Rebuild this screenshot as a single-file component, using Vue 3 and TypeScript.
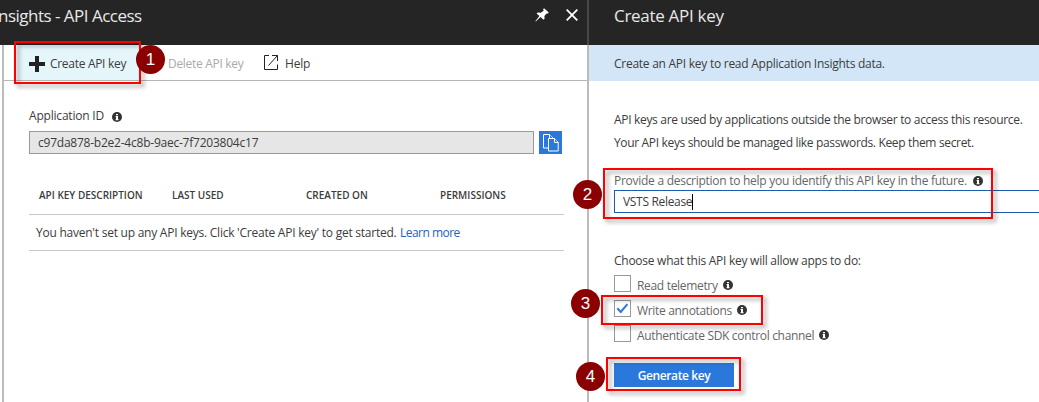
<script setup lang="ts">
import { ref } from 'vue'

interface Permission {
  id: string
  label: string
  checked: boolean
}

const columns = [
  { id: 'desc', label: 'API KEY DESCRIPTION' },
  { id: 'used', label: 'LAST USED' },
  { id: 'created', label: 'CREATED ON' },
  { id: 'perms', label: 'PERMISSIONS' },
]

const permissions = ref<Permission[]>([
  { id: 'read', label: 'Read telemetry', checked: false },
  { id: 'write', label: 'Write annotations', checked: true },
  { id: 'auth', label: 'Authenticate SDK control channel', checked: false },
])

const description = ref('VSTS Release')
const steps = [1, 2, 3, 4]
</script>

<template>
  <div class="screen">
    <section class="blade access">
      <header class="head">
        <h1 class="title access-title">nsights - API Access</h1>
        <svg class="pin" width="14" height="14" viewBox="0 0 14 14">
          <path d="M9 0.3 L13.8 4.5 L12.8 5.6 L11.6 5.4 L9.4 8 L9.6 10.8 L8.6 11.7 L5.5 9 L0.8 13.6 L0.3 13.2 L4.4 8 L1.6 5.6 L2.7 4.5 L5.9 4.7 L8.8 2.5 L8.1 1.2 Z" fill="#fff" />
        </svg>
        <svg class="close" width="12" height="12" viewBox="0 0 12 12">
          <path d="M0.7 0.7 L11.3 11.3 M11.3 0.7 L0.7 11.3" stroke="#fff" stroke-width="1.8" />
        </svg>
      </header>
      <div class="access-body">
        <nav class="toolbar">
          <button class="tool create">
            <svg width="16" height="16" viewBox="0 0 16 16"><path d="M6 0h4v6h6v4h-6v6H6v-6H0V6h6z" fill="#222" /></svg>
            <span class="t-create">Create API key</span>
          </button>
          <button class="tool delete"><span class="t-delete">Delete API key</span></button>
          <button class="tool help">
            <svg width="15" height="15" viewBox="0 0 15 15" fill="none" stroke="#222"><path d="M5 .5H.5V14.5H13.5V9.5M8 .5H13.5V6M13.5 .5L4.5 10.5" /></svg>
            <span class="t-help">Help</span>
          </button>
        </nav>
        <div class="content">
          <div class="label-row">
            <span class="t-appid">Application ID</span>
            <svg class="info" width="10" height="10" viewBox="0 0 10 10"><circle cx="5" cy="5" r="5" fill="#333" /><path d="M4 2h2v1.3H4zM3.6 4.1H6v3.2h.6v.9H3.5v-.9H4V5h-.4z" fill="#fff" /></svg>
          </div>
          <div class="id-row">
            <div class="id-box"><span class="t-uuid">c97da878-b2e2-4c8b-9aec-7f7203804c17</span></div>
            <button class="copy">
              <svg width="16" height="18" viewBox="0 0 16 18" fill="#2a78db" stroke="#fff">
                <path d="M.5 .5H6.5L10.5 4.5V14H.5Z" />
                <path d="M6.5 .5V4.5H10" />
                <path d="M5.5 4.5H11.5L15.2 8.2V17H5.5Z" />
                <path d="M11.5 4.5V8.5H15" />
              </svg>
            </button>
          </div>
          <div class="table">
            <div class="table-head">
              <span v-for="c in columns" :key="c.id" :class="'col-' + c.id">{{ c.label }}</span>
            </div>
            <div class="table-row">
              <span class="t-empty">You haven't set up any API keys. Click 'Create API key' to get started.</span>
              <a class="t-learn">Learn more</a>
            </div>
          </div>
        </div>
      </div>
    </section>

    <div class="divider"></div>

    <section class="blade create-blade">
      <header class="head"><h1 class="title create-title">Create API key</h1></header>
      <div class="banner"><span class="t-banner">Create an API key to read Application Insights data.</span></div>
      <div class="form">
        <p class="para"><span class="t-para1">API keys are used by applications outside the browser to access this resource.</span></p>
        <p class="para"><span class="t-para2">Your API keys should be managed like passwords. Keep them secret.</span></p>
        <div class="field-label">
          <span class="t-provide">Provide a description to help you identify this API key in the future.</span>
          <svg class="info" width="10" height="10" viewBox="0 0 10 10"><circle cx="5" cy="5" r="5" fill="#333" /><path d="M4 2h2v1.3H4zM3.6 4.1H6v3.2h.6v.9H3.5v-.9H4V5h-.4z" fill="#fff" /></svg>
        </div>
        <div class="field"><span class="t-value">{{ description }}</span><i class="caret"></i></div>
        <p class="choose"><span class="t-choose">Choose what this API key will allow apps to do:</span></p>
        <div v-for="p in permissions" :key="p.id" class="check-row" @click="p.checked = !p.checked">
          <span class="box">
            <svg v-if="p.checked" width="13" height="11" viewBox="0 0 13 11"><path d="M1.3 5.2L4.8 9L11.4 1.2" fill="none" stroke="#2a78db" stroke-width="2" /></svg>
          </span>
          <span class="check-label">{{ p.label }}</span>
          <svg class="info" width="10" height="10" viewBox="0 0 10 10"><circle cx="5" cy="5" r="5" fill="#333" /><path d="M4 2h2v1.3H4zM3.6 4.1H6v3.2h.6v.9H3.5v-.9H4V5h-.4z" fill="#fff" /></svg>
        </div>
        <button class="generate"><span class="t-generate">Generate key</span></button>
      </div>
    </section>

    <template v-for="n in steps" :key="n">
      <div class="frame" :class="'frame-' + n"></div>
      <div class="step" :class="'step-' + n">{{ n }}</div>
    </template>
  </div>
</template>

<style>
html, body { margin: 0; overflow: hidden; }
</style>

<style scoped>
.screen {
  position: relative;
  display: flex;
  width: 1039px;
  height: 402px;
  overflow: hidden;
  background: #fff;
  color: #3c3c3c;
  font: 12px/16px "Open Sans", "Noto Sans", sans-serif;
  letter-spacing: -0.26px;
  white-space: nowrap;
}
button {
  border: 0;
  padding: 0;
  margin: 0;
  background: none;
  color: inherit;
  font: inherit;
  letter-spacing: inherit;
}
svg { display: block; flex: none; }
span { flex: none; }
.blade { display: flex; flex-direction: column; }
.access { width: 587px; flex: none; }
.create-blade { flex: 1; min-width: 0; }
.head {
  display: flex;
  height: 45px;
  flex: none;
  background: #252525;
  color: #e8e8e8;
}
.title { margin: 0; font-size: 17px; line-height: 24px; font-weight: 400; padding-top: 4px; }
.access-title { width: 535px; margin-left: -2px; letter-spacing: -0.51px; }
.create-title { padding-left: 25px; letter-spacing: -0.3px; }
.pin { margin-top: 8px; margin-left: 2px; }
.close { margin: 9px 0 0 17px; }
.divider {
  width: 2px;
  flex: none;
  background: linear-gradient(#484848 45px, #bbb 45px);
}
.access-body {
  flex: 1;
  margin-left: 2px;
  border-left: 2px solid #bbb;
}
.toolbar {
  display: flex;
  height: 35px;
  border-bottom: 1px solid #b5b5b5;
}
.tool { display: flex; align-items: center; padding-top: 2px; box-sizing: border-box; }
.create { width: 123px; margin-left: 13px; padding-left: 12px; gap: 5px; background: #e5f6fb; }
.delete { margin-left: 28px; color: #aaa; width: 76px; }
.t-create, .t-delete { letter-spacing: -0.3px; }
.help { margin-left: 20px; gap: 6px; letter-spacing: -0.2px; }
.help svg { margin-top: -3px; }
.content { padding: 26px 23px 0 25px; }
.label-row { display: flex; align-items: center; height: 16px; gap: 8px; }
.t-appid { padding-top: 1px; letter-spacing: -0.2px; }
.label-row .info { margin-top: 3px; }
.id-row { display: flex; margin-top: 8px; gap: 5px; }
.id-box {
  display: flex;
  align-items: center;
  width: 505px;
  height: 23px;
  box-sizing: border-box;
  border: 1px solid #999;
  background: #e6e6e6;
  padding-left: 8px;
}
.t-uuid { padding-top: 1px; letter-spacing: -0.23px; }
.copy { display: flex; align-items: center; justify-content: center; width: 23px; height: 23px; background: #2a78db; }
.table { margin-top: 26px; }
.table-head {
  display: flex;
  align-items: center;
  height: 30px;
  padding: 0 0 4px 10px;
  border-bottom: 1px solid #c8c8c8;
  font-size: 10px;
  font-weight: 600;
  letter-spacing: 0;
}
.col-desc { width: 133px; }
.col-used { width: 134px; }
.col-created { width: 134px; }
.table-row {
  display: flex;
  align-items: center;
  height: 35px;
  padding-left: 7px;
  gap: 4px;
  border-bottom: 1px solid #c8c8c8;
}
.t-empty { width: 360px; letter-spacing: -0.24px; }
.t-learn { color: #1f5fc0; letter-spacing: -0.52px; }
.banner {
  display: flex;
  align-items: center;
  height: 36px;
  padding: 1px 0 0 25px;
  box-sizing: border-box;
  background: #d3e6f7;
}
.form { padding: 31px 0 0 25px; }
.para { height: 16px; margin: 0 0 7px; }
.t-para1 { letter-spacing: -0.32px; }
.t-para2 { letter-spacing: -0.34px; }
.field-label { display: flex; align-items: center; gap: 6px; height: 16px; margin-top: 22px; color: #666; }
.t-provide { letter-spacing: -0.27px; }
.field-label .info { margin-top: -1px; }
.field {
  display: flex;
  align-items: center;
  height: 23px;
  width: 440px;
  box-sizing: border-box;
  border: 1px solid #1c5bad;
  padding-left: 8px;
  margin-top: 1px;
}
.t-value { padding-top: 1px; letter-spacing: -0.32px; }
.caret { width: 1px; height: 16px; background: #000; }
.choose { height: 16px; margin: 40px 0 6px; }
.check-row { display: flex; align-items: center; gap: 6px; height: 17px; margin-bottom: 8px; color: #666; }
.box {
  display: flex;
  align-items: center;
  justify-content: center;
  width: 17px;
  height: 17px;
  box-sizing: border-box;
  border: 1px solid #999;
}
.check-label { padding-top: 4px; letter-spacing: -0.32px; }
.check-row .info { margin: 2px 0 0 -1px; }
.generate {
  display: flex;
  align-items: center;
  justify-content: center;
  width: 120px;
  height: 24px;
  margin-top: 21px;
  background: #2a78db;
  color: #fff;
  font-weight: 600;
}
.t-generate { padding-top: 2px; letter-spacing: -0.4px; }

.frame {
  position: absolute;
  box-sizing: border-box;
  border: 2px solid #f00;
  filter: drop-shadow(3px 3px 2px rgba(0, 0, 0, 0.4));
}
.frame-1 { left: 14px; top: 41px; width: 127px; height: 43px; }
.frame-2 { left: 603px; top: 168px; width: 390px; height: 51px; }
.frame-3 { left: 601px; top: 295px; width: 162px; height: 30px; }
.frame-4 { left: 606px; top: 357px; width: 135px; height: 34px; }
.step {
  position: absolute;
  width: 29px;
  height: 29px;
  border-radius: 50%;
  background: #8b0000;
  color: #fff;
  font: 17px/29px "Liberation Sans", sans-serif;
  letter-spacing: 0;
  text-align: center;
}
.step-1 { left: 136px; top: 45px; }
.step-2 { left: 573px; top: 180px; }
.step-3 { left: 571px; top: 289px; }
.step-4 { left: 576px; top: 362px; }
</style>
